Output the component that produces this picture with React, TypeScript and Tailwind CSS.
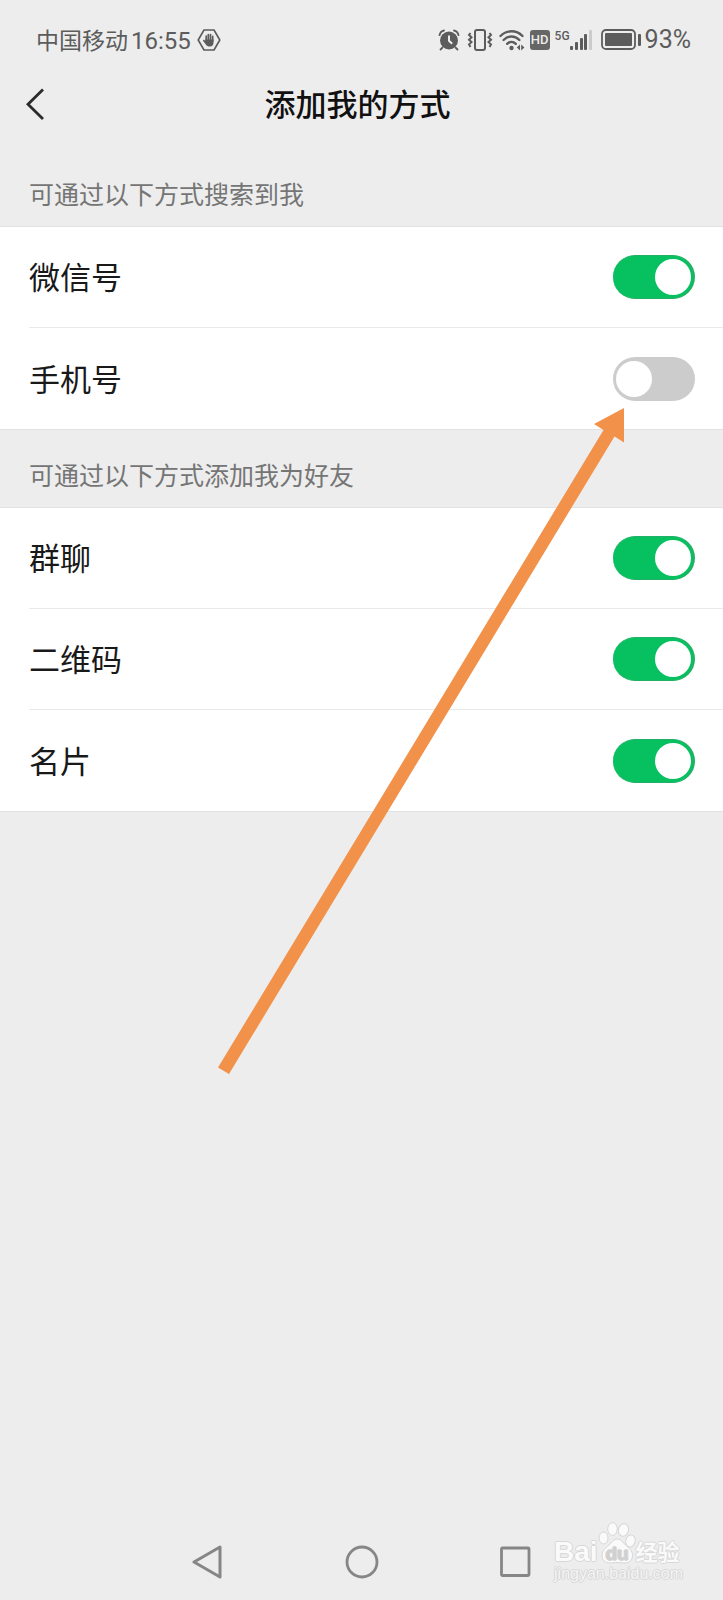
import React from 'react';

type Setting = { id: string; label: string; on: boolean };

const searchSettings: Setting[] = [
  { id: 'wechat-id', label: '微信号', on: true },
  { id: 'phone', label: '手机号', on: false },
];

const addSettings: Setting[] = [
  { id: 'group-chat', label: '群聊', on: true },
  { id: 'qr-code', label: '二维码', on: true },
  { id: 'contact-card', label: '名片', on: true },
];

const SettingRow: React.FC<{ setting: Setting }> = ({ setting }) => (
  <li className="ml-[29px] flex h-[101px] items-center justify-between border-b border-[#e8e8e8] pr-7 last:border-b-0">
    <label htmlFor={setting.id} className="pb-[2px] text-[31px] leading-10 text-[#191919]">
      {setting.label}
    </label>
    <input
      id={setting.id}
      type="checkbox"
      role="switch"
      defaultChecked={setting.on}
      className="flex h-11 w-[82px] appearance-none items-center rounded-full bg-[#cccccc] px-[3px] before:size-9 before:rounded-full before:bg-white before:content-[''] checked:justify-end checked:border-y checked:border-r-2 checked:border-[#22b068] checked:bg-[#07c160] checked:pr-[2px]"
    />
  </li>
);

const SettingGroup: React.FC<{ title: string; settings: Setting[] }> = ({ title, settings }) => (
  <section>
    <h2 className="px-[29px] pt-[29px] pb-[18px] text-[25px] leading-[30px] text-[#757575]">{title}</h2>
    <ul className="border-y border-[#e2e2e2] bg-white">
      {settings.map((s) => (
        <SettingRow key={s.id} setting={s} />
      ))}
    </ul>
  </section>
);

const HandIcon = () => (
  <svg width="24" height="24" viewBox="0 0 24 24" fill="none" aria-hidden="true">
    <path d="M7 2h10l5.800 10L17 22H7L1.200 12z" stroke="#5c5c5c" strokeWidth="1.600" strokeLinejoin="round" />
    <path
      d="M9.200 13V8.200M11.300 12V6.500M13.500 12V6.600M15.700 13V8.300"
      stroke="#5c5c5c"
      strokeWidth="1.700"
      strokeLinecap="round"
    />
    <path d="M8.300 11.500h8.200v3.300c0 2.400-1.300 3.700-3.600 3.700-2 0-3.100-.7-4.100-2.100l-2.700-3.500c-.4-.7.5-1.400 1.200-.9l1 .9z" fill="#5c5c5c" />
  </svg>
);

const AlarmIcon = () => (
  <svg width="22" height="22" viewBox="0 0 22 22" fill="none" stroke="#5c5c5c" aria-hidden="true">
    <circle cx="11" cy="11.500" r="9" fill="#5c5c5c" stroke="none" />
    <path d="M1.500 6.200C2 3.700 3.600 2 6 1.500M20.500 6.200C20 3.700 18.400 2 16 1.500M4.500 18.500l-2 2M17.500 18.500l2 2" strokeWidth="1.800" strokeLinecap="round" />
    <path d="M11 6.500v5.300l3.200 3" stroke="#ededed" strokeWidth="2" />
  </svg>
);

const VibrateIcon = () => (
  <svg width="26" height="22" viewBox="0 0 26 22" fill="none" stroke="#5c5c5c" strokeWidth="2" aria-hidden="true">
    <rect x="8" y="1" width="10" height="20" rx="2" />
    <path d="M3.500 4l-1.500 2 2.500 2.300-2.500 2.400 2.500 2.400-2.500 2.400 1.500 2.500M22.500 4l1.500 2-2.500 2.300 2.500 2.400-2.500 2.400 2.500 2.400-1.500 2.500" />
  </svg>
);

const WifiIcon = () => (
  <svg width="26" height="22" viewBox="0 0 26 22" fill="none" stroke="#5c5c5c" strokeWidth="2.400" aria-hidden="true">
    <path d="M1.500 7c6.300-6.300 15.700-6.300 22 0M4.600 11c4.600-4.700 11.200-4.700 15.800 0M8.200 14.800c2.600-2.600 6-2.600 8.600 0" strokeLinecap="round" />
    <circle cx="12.500" cy="19" r="2.200" fill="#5c5c5c" stroke="none" />
    <path d="M21 15.500v6L17.800 18.500zM22.200 15.500v6l3.200-3z" fill="#5c5c5c" stroke="none" />
  </svg>
);

const SignalIcon = () => (
  <svg width="22" height="22" viewBox="0 0 22 22" fill="#5c5c5c" aria-hidden="true">
    <rect x="0" y="17" width="3" height="4" rx="1" />
    <rect x="5" y="13" width="3" height="8" rx="1" />
    <rect x="10" y="9" width="3" height="12" rx="1" />
    <rect x="14" y="5" width="3" height="16" rx="1" />
    <rect x="19" y="1" width="3" height="20" rx="1" fill="#cbcbcb" />
  </svg>
);

const BatteryIcon = () => (
  <svg width="40" height="22" viewBox="0 0 40 22" aria-hidden="true">
    <rect x="1" y="1" width="33" height="19" rx="4" fill="none" stroke="#5c5c5c" strokeWidth="1.800" />
    <rect x="4" y="4" width="27" height="13" rx="1" fill="#5c5c5c" />
    <rect x="37" y="5" width="3" height="12" rx="1" fill="#5c5c5c" />
  </svg>
);

const StatusBar = () => (
  <div className="flex h-20 items-center justify-between pr-8 pl-9 text-[#5c5c5c]">
    <div className="flex items-center text-[23px] leading-8">
      <span className="pb-[2px]">中国移动</span>
      <span className="mr-[6px] ml-[3px] pt-[2px] font-[Roboto] text-[24px]">16:55</span>
      <HandIcon />
    </div>
    <div className="flex items-center">
      <AlarmIcon />
      <span className="ml-[7px] flex gap-[6px]">
        <VibrateIcon />
        <WifiIcon />
      </span>
      <span className="ml-[5px] flex h-5 w-5 items-center justify-center rounded-[3px] bg-[#666666] font-[Roboto] text-[13px] font-medium text-[#ededed]">
        HD
      </span>
      <span className="ml-[5px] h-6 font-[Roboto] text-[12px] leading-4 font-medium">5G</span>
      <SignalIcon />
      <span className="mr-1 ml-[9px]">
        <BatteryIcon />
      </span>
      <span className="font-[Roboto] text-[25px] leading-8">93%</span>
    </div>
  </div>
);

const NavBar = () => (
  <nav className="mt-auto flex h-[76px] items-center justify-center gap-[120px]">
    <button type="button" aria-label="返回">
      <svg width="34" height="34" viewBox="0 0 34 34" fill="none" stroke="#868686" strokeWidth="3" strokeLinejoin="round">
        <path d="M29 2v30L3 17z" />
      </svg>
    </button>
    <button type="button" aria-label="主屏幕">
      <svg width="34" height="34" viewBox="0 0 34 34" fill="none" stroke="#868686" strokeWidth="2.800">
        <circle cx="17" cy="17" r="15" />
      </svg>
    </button>
    <button type="button" aria-label="最近任务">
      <svg width="34" height="34" viewBox="0 0 34 34" fill="none" stroke="#868686" strokeWidth="2.800">
        <rect x="2.500" y="3" width="27.500" height="27.500" rx="1" />
      </svg>
    </button>
  </nav>
);

const PawLogo = () => (
  <svg width="38" height="42" viewBox="0 0 38 42" fill="#fafafa" stroke="#d6d6d6" aria-hidden="true">
    <ellipse cx="5.500" cy="16" rx="4.500" ry="6" />
    <ellipse cx="14.500" cy="7" rx="4.800" ry="6.400" />
    <ellipse cx="25.500" cy="8" rx="5" ry="6.400" transform="rotate(12 25.500 8)" />
    <ellipse cx="32.500" cy="19" rx="4.700" ry="6" transform="rotate(12 32.500 19)" />
    <path d="M19.500 17c4 0 5.500 3.500 8 6 3 3 7 5 7 10.500 0 5-3.500 7.500-7.500 7.500-3 0-5-.5-7.500-.5s-4.500.5-7.500.5c-4.500 0-8-2.500-8-7.500C4 28 8 26 11 23c2.500-2.500 4.500-6 8.500-6z" />
    <text x="19" y="38" textAnchor="middle" fill="#d0d0d0" stroke="none" fontFamily="Liberation Sans, sans-serif" fontSize="19" fontWeight="bold">
      du
    </text>
  </svg>
);

const Watermark = () => (
  <div className="pointer-events-none absolute right-10 bottom-4 font-['Liberation_Sans','Noto_Sans_CJK_SC',sans-serif] text-[#fafafa] [text-shadow:1px_0_#d8d8d8,-1px_0_#d8d8d8,0_1px_#d8d8d8,0_-1px_#d8d8d8]">
    <div className="flex items-end">
      <span className="text-[28px] leading-6 font-bold">Bai</span>
      <PawLogo />
      <span className="text-[22px] leading-[22px] font-bold">经验</span>
    </div>
    <div className="text-[16px] leading-5 text-[#f4f4f4]">jingyan.baidu.com</div>
  </div>
);

// Points at the phone number switch
const PointerArrow = () => (
  <svg
    className="pointer-events-none absolute top-[408px] right-[98px]"
    width="407"
    height="666"
    viewBox="0 0 407 666"
    fill="#f2924a"
    aria-hidden="true"
  >
    <path d="M406 0L376 16l9.500 6L0 659.500l11 6.500L396.500 28.500l9.500 6z" />
  </svg>
);

const App: React.FC = () => {
  return (
    <div className="relative flex min-h-screen flex-col overflow-hidden bg-[#ededed] font-['Noto_Sans_CJK_SC',sans-serif]">
      <StatusBar />
      <header className="mb-[21px] flex h-12 items-center pr-8 pl-6">
        <button type="button" aria-label="返回" className="w-6">
          <svg width="24" height="34" viewBox="0 0 24 34" fill="none" stroke="#2b2b2b" strokeWidth="2.800">
            <path d="M19 2.500L4 17.300l15 14.700" />
          </svg>
        </button>
        <h1 className="flex-1 pr-6 pb-[2px] text-center text-[31px] leading-10 font-medium text-[#111111]">添加我的方式</h1>
      </header>
      <main>
        <SettingGroup title="可通过以下方式搜索到我" settings={searchSettings} />
        <SettingGroup title="可通过以下方式添加我为好友" settings={addSettings} />
      </main>
      <NavBar />
      <PointerArrow />
      <Watermark />
    </div>
  );
};

export default App;
